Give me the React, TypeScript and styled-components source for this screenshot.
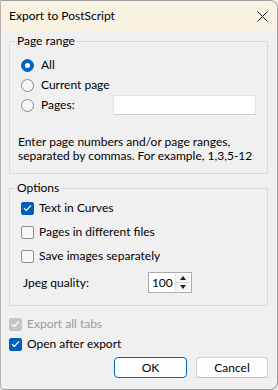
import styled, { createGlobalStyle } from 'styled-components';

const GlobalStyle = createGlobalStyle`
  html, body {
    margin: 0;
    padding: 0;
    background: #f0f0f0;
  }
  body {
    font-family: Lato, "Noto Sans", sans-serif;
    font-size: 12px;
    line-height: 16px;
    color: #000;
  }
`;

const Window = styled.div`
  box-sizing: border-box;
  width: 278px;
  height: 390px;
  display: flex;
  flex-direction: column;
  background: #f0f0f0;
  border: 1px solid #9d9d9d;
  border-left-color: #b4b4b4;
  border-radius: 0 8px 8px 4px;
  overflow: hidden;
`;

const TitleBar = styled.div`
  height: 30px;
  flex: none;
  display: flex;
  align-items: center;
  justify-content: space-between;
  padding: 0 9px 0 8px;
  background: #f7f2e2;
  font-size: 12px;
`;

const CloseIcon = () => (
  <svg width="11" height="11" viewBox="0 0 11 11">
    <path d="M0.5 0.5 L10.5 10.5 M10.5 0.5 L0.5 10.5" stroke="#1a1a1a" strokeWidth="1" fill="none" />
  </svg>
);

const Body = styled.div`
  flex: 1;
  display: flex;
  flex-direction: column;
  padding: 2px 9px 0 8px;
`;

const Group = styled.fieldset<{ $mt?: number }>`
  margin: ${p => p.$mt ?? 0}px 0 0 0;
  padding: 0;
  border: 1px solid #dadada;
  min-width: 0;
`;

const Legend = styled.legend`
  margin-left: 5px;
  padding: 0 2px;
  line-height: 16px;
`;

const GroupInner = styled.div<{ $pt: number; $pb: number }>`
  display: flex;
  flex-direction: column;
  padding: ${p => p.$pt}px 11px ${p => p.$pb}px 11px;
`;

const Row = styled.label<{ $h: number }>`
  display: flex;
  align-items: center;
  height: ${p => p.$h}px;
  gap: 7px;
`;

const Radio = styled.span<{ $on?: boolean }>`
  box-sizing: border-box;
  width: 13px;
  height: 13px;
  flex: none;
  border-radius: 50%;
  display: flex;
  align-items: center;
  justify-content: center;
  background: ${p => (p.$on ? '#0067c0' : '#f6f6f6')};
  border: 1px solid ${p => (p.$on ? '#0067c0' : '#8a8a8a')};
  &::after {
    content: '';
    display: ${p => (p.$on ? 'block' : 'none')};
    width: 5px;
    height: 5px;
    border-radius: 50%;
    background: #fff;
  }
`;

const PagesInput = styled.div`
  box-sizing: border-box;
  margin-left: auto;
  width: 143px;
  height: 20px;
  background: #fff;
  border: 1px solid #e3e3e3;
  border-bottom-color: #cfcfcf;
`;

const Hint = styled.p`
  margin: 20px 0 0 -3px;
  line-height: 14px;
  white-space: nowrap;
`;

const Box = styled.span<{ $on?: boolean; $disabled?: boolean }>`
  box-sizing: border-box;
  width: 13px;
  height: 13px;
  flex: none;
  border-radius: 2px;
  display: flex;
  align-items: center;
  justify-content: center;
  background: ${p => (p.$disabled ? '#c5c5c5' : p.$on ? '#005fb8' : '#f7f7f7')};
  border: 1px solid ${p => (p.$disabled ? '#c5c5c5' : p.$on ? '#005fb8' : '#8f8f8f')};
`;

const CheckRow = styled.label<{ $h: number; $disabled?: boolean }>`
  display: flex;
  align-items: center;
  height: ${p => p.$h}px;
  gap: 5px;
  color: ${p => (p.$disabled ? '#9c9c9c' : '#000')};
`;

const Tick = () => (
  <svg width="9" height="8" viewBox="0 0 9 8">
    <path d="M1 4.2 L3.4 6.5 L8 1.3" stroke="#fff" strokeWidth="1.2" fill="none" />
  </svg>
);

const Check = ({ on, disabled, label, h }: { on?: boolean; disabled?: boolean; label: string; h: number }) => (
  <CheckRow $h={h} $disabled={disabled}>
    <Box $on={on} $disabled={disabled}>{on && <Tick />}</Box>
    {label}
  </CheckRow>
);

const QualityRow = styled.div`
  display: flex;
  align-items: center;
  height: 21px;
  margin-top: 4px;
  padding-left: 2px;
`;

const Spin = styled.div`
  box-sizing: border-box;
  margin-left: 59px;
  width: 44px;
  height: 21px;
  display: flex;
  align-items: center;
  background: #fff;
  border: 1px solid #a9a9a9;
  padding: 1px;
`;

const SpinValue = styled.span`
  flex: 1;
  padding-left: 2px;
  line-height: 17px;
`;

const SpinArrows = styled.div`
  width: 14px;
  height: 17px;
  display: flex;
  flex-direction: column;
  border-left: 1px solid #e6e6e6;
`;

const Arrow = styled.div<{ $down?: boolean }>`
  flex: 1;
  display: flex;
  align-items: center;
  justify-content: center;
  background: #f3f3f3;
  border-top: ${p => (p.$down ? '1px solid #dadada' : 'none')};
  &::after {
    content: '';
    border-left: 3px solid transparent;
    border-right: 3px solid transparent;
    ${p => (p.$down ? 'border-top: 4px solid #222;' : 'border-bottom: 4px solid #222;')}
  }
`;

const Footer = styled.div`
  display: flex;
  flex-direction: column;
  margin-top: 8px;
`;

const Buttons = styled.div`
  display: flex;
  justify-content: flex-end;
  gap: 9px;
  margin-top: 3px;
`;

const Button = styled.button<{ $primary?: boolean; $w: number }>`
  box-sizing: border-box;
  width: ${p => p.$w}px;
  height: 21px;
  padding: 0;
  font: inherit;
  color: #000;
  background: #fdfdfd;
  border: 1px solid ${p => (p.$primary ? '#0067c0' : '#d3d3d3')};
  border-bottom-color: ${p => (p.$primary ? '#0067c0' : '#bcbcbc')};
  border-radius: 4px;
`;

export default function App() {
  return (
    <>
      <GlobalStyle />
      <Window>
        <TitleBar>
          <span>Export to PostScript</span>
          <CloseIcon />
        </TitleBar>
        <Body>
          <Group>
            <Legend>Page range</Legend>
            <GroupInner $pt={6} $pb={10}>
              <Row $h={20}><Radio $on />All</Row>
              <Row $h={20}><Radio />Current page</Row>
              <Row $h={20}><Radio />Pages:<PagesInput /></Row>
              <Hint>
                Enter page numbers and/or page ranges,<br />
                separated by commas. For example, 1,3,5-12
              </Hint>
            </GroupInner>
          </Group>
          <Group $mt={6}>
            <Legend>Options</Legend>
            <GroupInner $pt={0} $pb={12}>
              <Check h={24} on label="Text in Curves" />
              <Check h={24} label="Pages in different files" />
              <Check h={24} label="Save images separately" />
              <QualityRow>
                Jpeg quality:
                <Spin>
                  <SpinValue>100</SpinValue>
                  <SpinArrows>
                    <Arrow />
                    <Arrow $down />
                  </SpinArrows>
                </Spin>
              </QualityRow>
            </GroupInner>
          </Group>
          <Footer>
            <Check h={20} on disabled label="Export all tabs" />
            <Check h={20} on label="Open after export" />
            <Buttons>
              <Button $primary $w={73}>OK</Button>
              <Button $w={72}>Cancel</Button>
            </Buttons>
          </Footer>
        </Body>
      </Window>
    </>
  );
}
